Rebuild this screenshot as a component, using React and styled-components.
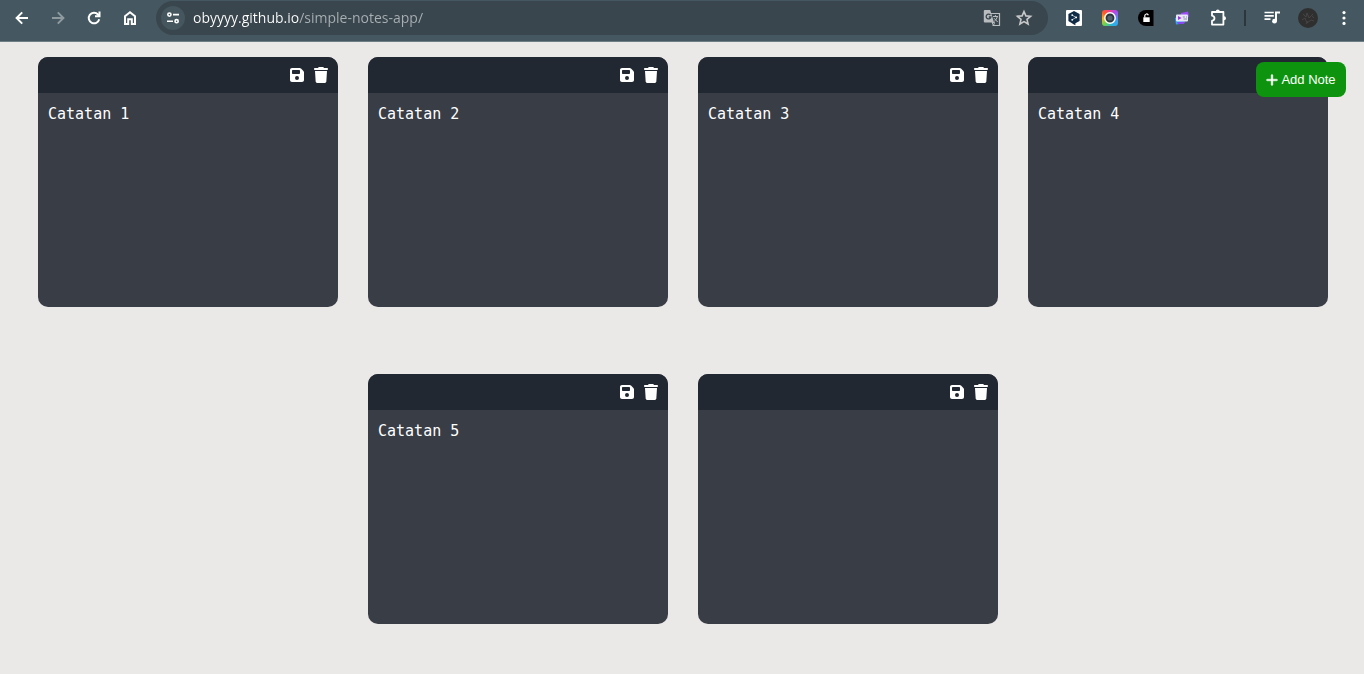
import React from "react";
import styled, { createGlobalStyle } from "styled-components";
import { FaFloppyDisk, FaTrash, FaPlus } from "react-icons/fa6";

const GlobalStyle = createGlobalStyle`
  *, *::before, *::after { box-sizing: border-box; }
  body {
    margin: 0;
    background: #ebe9e7;
    font-family: "Liberation Sans", Arial, sans-serif;
  }
  button { border: 0; padding: 0; background: none; color: inherit; cursor: pointer; }
`;

const Toolbar = styled.header`
  display: flex;
  align-items: center;
  height: 42px;
  padding: 0 2px 6px 4px;
  background: #455760;
  border-bottom: 1px solid #6f7d84;
  color: #ffffff;
`;

const ToolButton = styled.button`
  display: flex;
  align-items: center;
  justify-content: center;
  flex: none;
  width: 36px;
  height: 34px;
  opacity: ${(p) => (p.$dim ? 0.4 : 1)};
`;

const AddressBar = styled.div`
  display: flex;
  align-items: center;
  flex: 1;
  min-width: 0;
  height: 34px;
  margin: 0 8px;
  padding: 0 8px 0 5px;
  border-radius: 17px;
  background: #39464d;
`;

const SiteButton = styled.button`
  display: flex;
  align-items: center;
  justify-content: center;
  flex: none;
  width: 24px;
  height: 24px;
  border-radius: 50%;
  && { background: #45565f; }
`;

const AddressInput = styled.input`
  flex: 1;
  min-width: 0;
  height: 24px;
  margin-left: 8px;
  padding: 0;
  border: 0;
  outline: 0;
  font: 14px/24px "Open Sans", "Noto Sans", sans-serif;
  color: #ffffff;
  -webkit-text-fill-color: transparent;
  background: linear-gradient(to right, #ffffff 106px, #a9b0b4 106px);
  background-clip: text;
  -webkit-background-clip: text;
`;

const BarButton = styled.button`
  display: flex;
  align-items: center;
  justify-content: center;
  flex: none;
  width: 32px;
  height: 24px;
`;

const Divider = styled.div`
  flex: none;
  width: 2px;
  height: 16px;
  margin: 0 8px;
  background: #2c373d;
`;

const Notes = styled.main`
  display: flex;
  flex-wrap: wrap;
  justify-content: center;
  gap: 67px 30px;
  padding: 15px 18px 50px 20px;
`;

const Note = styled.section`
  display: flex;
  flex-direction: column;
  width: 300px;
  height: 250px;
  border-radius: 10px;
  overflow: hidden;
  background: #393d46;
`;

const NoteHeader = styled.div`
  display: flex;
  align-items: center;
  justify-content: flex-end;
  gap: 10px;
  height: 36px;
  padding: 0 10px;
  background: #222832;
`;

const NoteAction = styled.button`
  display: flex;
  && { color: #ffffff; }

  svg {
    width: 14px;
    height: 16px;
  }
`;

const NoteText = styled.textarea`
  flex: 1;
  padding: 10px;
  border: 0;
  outline: 0;
  resize: none;
  background: transparent;
  color: #ffffff;
  font: 15px/22px "DejaVu Sans Mono", monospace;
`;

const AddButton = styled.button`
  position: fixed;
  top: 62px;
  right: 18px;
  display: flex;
  align-items: center;
  justify-content: center;
  gap: 3px;
  width: 90px;
  height: 35px;
  border-radius: 8px;
  font: 13px "Liberation Sans", Arial, sans-serif;
  && { background: #0d930d; color: #ffffff; }

  svg {
    width: 12px;
    height: 14px;
    stroke: currentColor;
    stroke-width: 16px;
  }
`;

const Stroke = ({ children, width = 2 }) => (
  <svg width="18" height="18" viewBox="0 0 18 18" fill="none" stroke="currentColor" strokeWidth={width} aria-hidden="true">
    {children}
  </svg>
);

const BackIcon = () => <Stroke><path d="M15 9H4M9.2 3.4L3.6 9l5.6 5.6" /></Stroke>;
const ForwardIcon = () => <Stroke><path d="M3 9h11M8.8 3.4L14.4 9l-5.6 5.6" /></Stroke>;
const ReloadIcon = () => (
  <Stroke>
    <path d="M14.2 10.2A5.3 5.3 0 1 1 13 5.5L14 7" />
    <path d="M14.5 2.6v4.6H10" />
  </Stroke>
);
const HomeIcon = () => <Stroke><path d="M4 15V7.2l5-4 5 4V15h-3.2v-4.8H7.2V15z" /></Stroke>;
const TuneIcon = () => (
  <svg width="14" height="14" viewBox="0 0 14 14" fill="none" stroke="currentColor" strokeWidth="1.6" aria-hidden="true">
    <circle cx="3.4" cy="3.6" r="1.6" /><path d="M7 3.6h6M1 10.2h6" /><circle cx="10.6" cy="10.2" r="1.6" />
  </svg>
);
const TranslateIcon = () => (
  <svg width="18" height="18" viewBox="0 0 18 18" aria-hidden="true">
    <path d="M7 4.5h9.5v12H9.5" fill="none" stroke="#b9bcbe" strokeWidth="1.2" />
    <path d="M1.8 1h5.4l3.8 12.4H1.8A1 1 0 0 1 .8 12.4V2a1 1 0 0 1 1-1z" fill="#b9bcbe" />
    <path d="M7.4 6a2.4 2.4 0 1 0 .5 2H5.8" fill="none" stroke="#39464d" strokeWidth="1.3" />
    <path d="M10 7.5h5M12.4 6v1.5M14.3 7.5c-.4 2-1.5 3.6-3 4.8M11 9.2l3.7 3.8M9 13.5l1.5 3 1-3z" fill="none" stroke="#b9bcbe" />
  </svg>
);
const StarIcon = () => (
  <svg width="18" height="18" viewBox="0 0 18 18" fill="none" stroke="#c8c8c8" strokeWidth="1.6" aria-hidden="true">
    <path d="M9 2.6l1.9 4.3 4.7.4-3.6 3.1 1.1 4.6L9 12.6 4.9 15 6 10.4 2.4 7.3l4.7-.4z" />
  </svg>
);
const HexIcon = () => (
  <svg width="16" height="16" viewBox="0 0 16 16" aria-hidden="true">
    <rect width="16" height="16" rx="1" fill="#ffffff" />
    <path d="M8 .9l5.6 3.2v6.8L9.4 13.3v2L7.5 14.2 2.4 11V4.1z" fill="#0f2b46" />
    <path d="M6.3 5.2l3.8 2.2-3.8 2.3" fill="none" stroke="#fff" strokeWidth=".6" />
    <circle cx="6.2" cy="5.1" r=".9" fill="#fff" /><circle cx="10.2" cy="7.4" r=".9" fill="#fff" /><circle cx="6.2" cy="9.8" r=".9" fill="#fff" />
  </svg>
);
const Spectrum = styled.span`
  display: flex;
  align-items: center;
  justify-content: center;
  width: 16px;
  height: 16px;
  border-radius: 3px;
  background: conic-gradient(#f23c9c, #a84cf0 12%, #3fa0f5 30%, #27b3e0 46%, #6fd34a 62%, #ffb21e 74%, #ff5a1e 86%, #f23c9c);
`;
const SpectrumIcon = () => (
  <Spectrum>
    <svg width="14" height="14" viewBox="0 0 14 14" aria-hidden="true">
      <circle cx="7" cy="7" r="5.2" fill="#2b363e" stroke="#fff" strokeWidth="1.5" />
      <circle cx="7" cy="7" r="2.6" fill="#53616c" />
    </svg>
  </Spectrum>
);
const LockIcon = () => (
  <svg width="16" height="16" viewBox="0 0 16 16" aria-hidden="true">
    <path d="M8 0h7.5v16H8A8 8 0 0 1 8 0z" fill="#000" />
    <rect x="5.3" y="7.3" width="6.4" height="4.7" fill="#fff" />
    <path d="M6.8 7.5V5.6a1.8 1.8 0 0 1 3.5-.4" fill="none" stroke="#fff" strokeWidth="1.2" />
  </svg>
);
const CardIcon = () => (
  <svg width="16" height="16" viewBox="0 0 16 16" aria-hidden="true">
    <path d="M7 3l7-1.5 1 5-3 3H6z" fill="#9a4df5" />
    <path d="M1 8l4-2 6 6-1 1.5-8 1z" fill="#28a8f5" />
    <path d="M3 12.2l7-.6 1 1-2 1.5H4z" fill="#8a45ef" />
    <rect x="2" y="4.5" width="12" height="7" rx="1" fill="#e9e6f7" />
    <path d="M4 6l3.6 2L4 10z" fill="#9c36df" /><path d="M8.8 7h2M9.5 9H13M12 7h1" stroke="#8390a5" strokeWidth="1.2" />
  </svg>
);
const PuzzleIcon = () => (
  <svg width="20" height="20" viewBox="0 0 20 20" fill="none" stroke="currentColor" strokeWidth="1.8" strokeLinejoin="round" aria-hidden="true">
    <path d="M4 4h11.4v12.6H4v-3.8c3.3-.6 3.3-4.5 0-5.1z" />
    <path d="M7.8 3.4a2 2 0 0 1 4 0zM16 8.3a2 2 0 0 1 0 4z" fill="currentColor" stroke="none" />
  </svg>
);
const QueueIcon = () => (
  <svg width="18" height="18" viewBox="0 0 18 18" fill="none" stroke="currentColor" strokeWidth="1.7" aria-hidden="true">
    <path d="M1.5 3.5h9.3M1.5 6.8h9.3M1.5 10.1h6" />
    <path d="M13 12V3.5h4" strokeWidth="2" /><circle cx="11.5" cy="12.2" r="2.4" fill="currentColor" stroke="none" />
  </svg>
);
const AvatarIcon = () => (
  <svg width="20" height="20" viewBox="0 0 20 20" aria-hidden="true">
    <circle cx="10" cy="10" r="10" fill="#302f2f" />
    <path d="M5 6l3 3 1-4 2 5 4-4M4 12l3-2 2 5 4-3 3 1M8 16l2-3M14 8l2 2" fill="none" stroke="#4a4847" strokeWidth=".8" />
  </svg>
);
const DotsIcon = () => (
  <svg width="18" height="18" viewBox="0 0 18 18" fill="currentColor" aria-hidden="true">
    <circle cx="9" cy="3.6" r="1.6" /><circle cx="9" cy="9" r="1.6" /><circle cx="9" cy="14.4" r="1.6" />
  </svg>
);

const navigation = [
  ["Back", BackIcon],
  ["Forward", ForwardIcon],
  ["Reload", ReloadIcon],
  ["Home", HomeIcon],
];
const extensions = [
  ["Translator", HexIcon],
  ["Colour picker", SpectrumIcon],
  ["Unlock", LockIcon],
  ["Media cards", CardIcon],
  ["Extensions", PuzzleIcon],
];
const menus = [
  ["Media controls", QueueIcon],
  ["Profile", AvatarIcon],
  ["Menu", DotsIcon],
];
const notes = ["Catatan 1", "Catatan 2", "Catatan 3", "Catatan 4", "Catatan 5", ""];

const ToolGroup = ({ items }) =>
  items.map(([label, Icon]) => (
    <ToolButton key={label} type="button" aria-label={label} $dim={label === "Forward"}>
      <Icon />
    </ToolButton>
  ));

export default function App() {
  return (
    <>
      <GlobalStyle />
      <Toolbar>
        <ToolGroup items={navigation} />
        <AddressBar>
          <SiteButton type="button" aria-label="Site information"><TuneIcon /></SiteButton>
          <AddressInput aria-label="Address" defaultValue="obyyyy.github.io/simple-notes-app/" spellCheck={false} />
          <BarButton type="button" aria-label="Translate page"><TranslateIcon /></BarButton>
          <BarButton type="button" aria-label="Bookmark page"><StarIcon /></BarButton>
        </AddressBar>
        <ToolGroup items={extensions} />
        <Divider />
        <ToolGroup items={menus} />
      </Toolbar>
      <AddButton type="button"><FaPlus aria-hidden="true" />Add Note</AddButton>
      <Notes>
        {notes.map((text, index) => (
          <Note key={index}>
            <NoteHeader>
              <NoteAction type="button" aria-label="Save note"><FaFloppyDisk /></NoteAction>
              <NoteAction type="button" aria-label="Delete note"><FaTrash /></NoteAction>
            </NoteHeader>
            <NoteText aria-label={`Note ${index + 1}`} defaultValue={text} spellCheck={false} />
          </Note>
        ))}
      </Notes>
    </>
  );
}
